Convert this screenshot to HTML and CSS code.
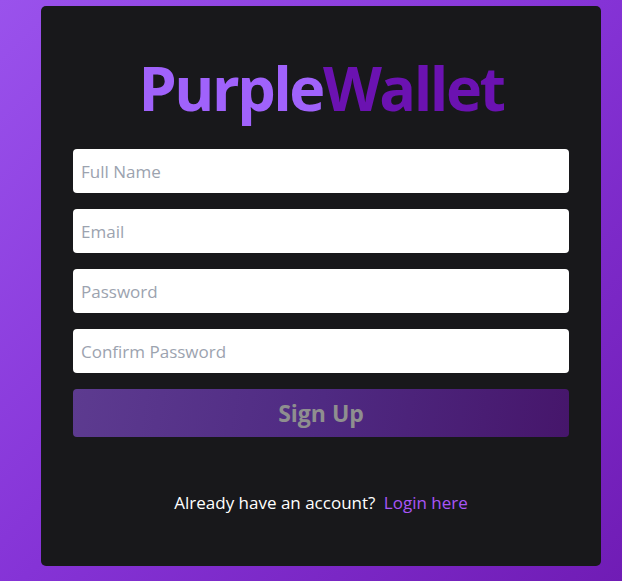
FILE: index.html
```html
<!DOCTYPE html>
<html>
<head>
<meta charset="utf-8">
<link rel="stylesheet" href="styles.css">
</head>
<body>
<div class="card">
  <h1 class="title"><span class="t1">Purple</span><span class="t2">Wallet</span></h1>
  <form class="form">
    <input class="field" type="text" placeholder="Full Name">
    <input class="field" type="email" placeholder="Email">
    <input class="field" type="password" placeholder="Password">
    <input class="field" type="password" placeholder="Confirm Password">
    <button class="btn" type="button">Sign Up</button>
  </form>
  <p class="footer">Already have an account? <a class="link" href="#">Login here</a></p>
</div>
</body>
</html>
```
FILE: styles.css
```css
html, body {
  margin: 0;
  height: 100%;
}
body {
  background: linear-gradient(135deg, #9a52ec 0%, #8533d6 50%, #701cb5 100%);
  font-family: "Open Sans", "Noto Sans", sans-serif;
  padding: 6px 0 0 41px;
  box-sizing: border-box;
  overflow: hidden;
}
.card {
  width: 560px;
  height: 560px;
  box-sizing: border-box;
  background: #18181b;
  border-radius: 5px;
  padding: 32px;
  display: flex;
  flex-direction: column;
}
.title {
  margin: 10px 0 21px;
  text-align: center;
  font-size: 61px;
  line-height: 80px;
  font-weight: 700;
  letter-spacing: -2.5px;
}
.t1 { color: #a062fb; }
.t2 { color: #6b12b1; }
.form {
  display: flex;
  flex-direction: column;
  gap: 16px;
}
.field {
  height: 44px;
  box-sizing: border-box;
  border: none;
  border-radius: 4px;
  background: #fff;
  padding: 0 8px;
  font-family: inherit;
  font-size: 17px;
  outline: none;
}
.field::placeholder { color: #9ca3af; }
.btn {
  height: 48px;
  border: none;
  border-radius: 4px;
  background: linear-gradient(100deg, #5d3b90 0%, #4f2a82 50%, #46166b 100%);
  color: #8f8f8f;
  font-family: inherit;
  font-size: 23px;
  font-weight: 700;
}
.footer {
  margin: 54px 0 0;
  text-align: center;
  color: #fff;
  font-size: 17px;
  line-height: 24px;
}
.link {
  color: #a855f7;
  text-decoration: none;
  margin-left: 4px;
}
```
